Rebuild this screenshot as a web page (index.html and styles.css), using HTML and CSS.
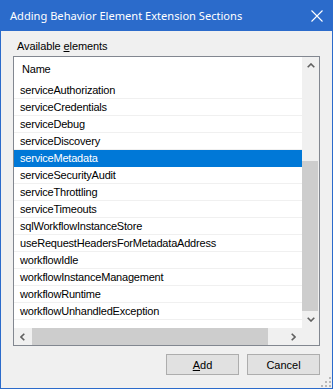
FILE: index.html
```html
<!DOCTYPE html>
<html>
<head>
<meta charset="utf-8">
<link rel="stylesheet" href="styles.css">
</head>
<body>
<div class="window">
  <div class="titlebar">
    <span class="title">Adding Behavior Element Extension Sections</span>
    <svg class="close" width="12" height="12" viewBox="0 0 12 12"><path d="M0.5 0.5 L11.5 11.5 M11.5 0.5 L0.5 11.5" stroke="#fff" stroke-width="1.1" fill="none"/></svg>
  </div>
  <div class="client">
    <div class="label">Available <u>e</u>lements</div>
    <div class="listbox">
      <div class="content">
        <div class="header">Name</div>
        <div class="row">serviceAuthorization</div>
        <div class="row">serviceCredentials</div>
        <div class="row">serviceDebug</div>
        <div class="row">serviceDiscovery</div>
        <div class="row selected">serviceMetadata</div>
        <div class="row">serviceSecurityAudit</div>
        <div class="row">serviceThrottling</div>
        <div class="row">serviceTimeouts</div>
        <div class="row">sqlWorkflowInstanceStore</div>
        <div class="row">useRequestHeadersForMetadataAddress</div>
        <div class="row">workflowIdle</div>
        <div class="row">workflowInstanceManagement</div>
        <div class="row">workflowRuntime</div>
        <div class="row">workflowUnhandledException</div>
      </div>
      <div class="vscroll">
        <div class="sbtn"><svg width="8" height="5" viewBox="0 0 8 5"><path d="M0.7 4.3 L4 1 L7.3 4.3" stroke="#606060" stroke-width="1.6" fill="none"/></svg></div>
        <div class="vtrack"><div class="vthumb"></div></div>
        <div class="sbtn"><svg width="8" height="5" viewBox="0 0 8 5"><path d="M0.7 0.7 L4 4 L7.3 0.7" stroke="#606060" stroke-width="1.6" fill="none"/></svg></div>
      </div>
      <div class="hscroll">
        <div class="sbtn"><svg width="5" height="8" viewBox="0 0 5 8"><path d="M4.3 0.7 L1 4 L4.3 7.3" stroke="#606060" stroke-width="1.6" fill="none"/></svg></div>
        <div class="htrack"><div class="hthumb"></div></div>
        <div class="sbtn"><svg width="5" height="8" viewBox="0 0 5 8"><path d="M0.7 0.7 L4 4 L0.7 7.3" stroke="#606060" stroke-width="1.6" fill="none"/></svg></div>
      </div>
      <div class="corner"></div>
    </div>
    <div class="buttons">
      <button class="btn"><u>A</u>dd</button>
      <button class="btn">Cancel</button>
    </div>
    <svg class="grip" width="10" height="10" viewBox="0 0 10 10" fill="#b8b8b8">
      <rect x="8" y="0" width="2" height="2"/>
      <rect x="4" y="4" width="2" height="2"/><rect x="8" y="4" width="2" height="2"/>
      <rect x="0" y="8" width="2" height="2"/><rect x="4" y="8" width="2" height="2"/><rect x="8" y="8" width="2" height="2"/>
    </svg>
  </div>
</div>
</body>
</html>
```
FILE: styles.css
```css
html, body {
  margin: 0;
  padding: 0;
}
.window {
  width: 333px;
  height: 389px;
  box-sizing: border-box;
  background: #2b6bcb;
  padding: 0 1px 1px 1px;
  display: flex;
  flex-direction: column;
  font-family: "Liberation Sans", Arial, sans-serif;
}
.titlebar {
  height: 31px;
  flex: none;
  display: flex;
  align-items: center;
  justify-content: space-between;
  padding: 0 9px 0 9px;
  color: #fff;
  font-family: "Noto Sans", "Open Sans", sans-serif;
  font-size: 11.1px;
}
.title {
  position: relative;
  top: 0;
}
.close {
  position: relative;
  top: 0;
}
.client {
  flex: 1;
  background: #f0f0f0;
  padding: 0 12px 0 12px;
  display: flex;
  flex-direction: column;
  position: relative;
}
.label {
  font-size: 11px;
  line-height: 13px;
  color: #000;
  margin: 9px 0 3px 4px;
  letter-spacing: -0.1px;
}
.listbox {
  width: 307px;
  height: 290px;
  box-sizing: border-box;
  border: 1px solid #828790;
  background: #fff;
  display: grid;
  grid-template-columns: 288px 17px;
  grid-template-rows: 271px 17px;
}
.content {
  overflow: hidden;
  font-size: 11px;
  color: #000;
  letter-spacing: -0.2px;
}
.header {
  height: 25px;
  line-height: 17px;
  padding: 4px 0 0 8px;
  box-sizing: border-box;
}
.row {
  height: 17px;
  box-sizing: border-box;
  border-bottom: 1px solid #f0f0f0;
  padding-left: 6px;
  line-height: 17px;
  white-space: nowrap;
}
.row.selected {
  background: #0078d7;
  color: #fff;
  border-bottom-color: #0078d7;
}
.vscroll {
  background: #f0f0f0;
  display: flex;
  flex-direction: column;
}
.sbtn {
  width: 17px;
  height: 17px;
  flex: none;
  display: flex;
  align-items: center;
  justify-content: center;
}
.vtrack {
  flex: 1;
  display: flex;
  flex-direction: column;
  padding: 0 1px 0 0;
}
.vthumb {
  margin-top: 87px;
  height: 150px;
  background: #cdcdcd;
}
.hscroll {
  background: #f0f0f0;
  display: flex;
}
.htrack {
  flex: 1;
  display: flex;
}
.hthumb {
  margin-left: 1px;
  width: 236px;
  background: #cdcdcd;
}
.corner {
  background: #f0f0f0;
}
.buttons {
  display: flex;
  justify-content: flex-end;
  gap: 8px;
  margin-top: 8px;
}
.btn {
  width: 73px;
  height: 21px;
  box-sizing: border-box;
  border: 1px solid #adadad;
  background: #e1e1e1;
  font-family: "Liberation Sans", Arial, sans-serif;
  font-size: 11px;
  color: #000;
  padding: 0;
  margin: 0;
}
.grip {
  position: absolute;
  right: 1px;
  bottom: 1px;
}
```
